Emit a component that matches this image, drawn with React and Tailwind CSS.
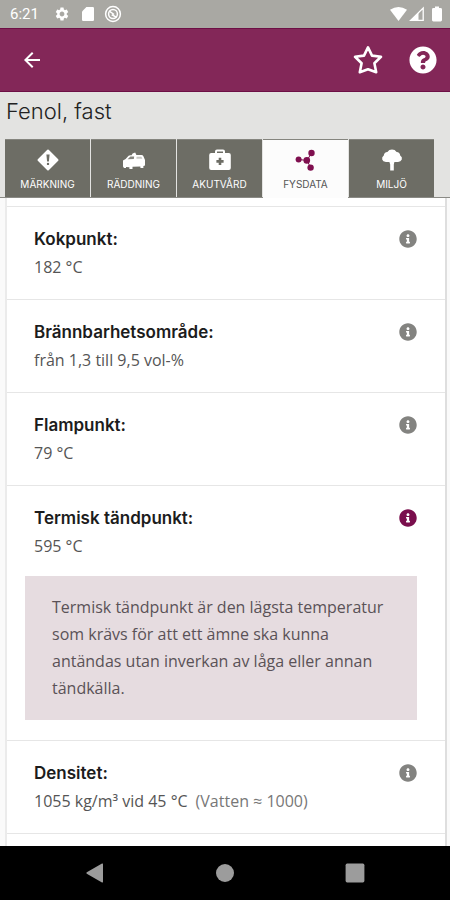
import { useState } from 'react';
import { FaInfoCircle, FaQuestionCircle } from 'react-icons/fa';
import { MdArrowBack, MdSettings } from 'react-icons/md';

const StarIcon = () => (
    <svg className="w-8 h-8" viewBox="0 0 32 32" fill="none" stroke="currentColor" strokeWidth="2.6" strokeLinejoin="round">
        <path d="M16 3.4 L20 11.6 L29 12.8 L22.4 19.2 L24.2 28.2 L16 25.2 L7.8 28.2 L9.6 19.2 L3 12.8 L12 11.6 Z" />
    </svg>
);

const WarningIcon = () => (
    <svg className="w-6 h-6" viewBox="0 0 24 24">
        <rect x="4.3" y="4.3" width="15.4" height="15.4" rx="1" transform="rotate(45 12 12)" fill="currentColor" />
        <path d="M10.4 6.5 h3.2 l-.7 7 h-1.8 Z" fill="#6d6d65" />
        <circle cx="12" cy="15.9" r="1.2" fill="#6d6d65" />
    </svg>
);

const RescueIcon = () => (
    <svg className="w-6 h-6" viewBox="0 0 24 24" fill="currentColor">
        <path d="M1 18.6 V12.4 L3.6 11 L6.6 7.8 Q7.2 7.2 8.2 7.2 H9.6 L10.6 5.4 L13.2 4.6 L14.4 7 H19.5 Q20.8 7 21.4 8.2 L23 12 V17.6 L21.4 18 V20 H18.4 V18.6 L10.5 18.8 V21 H7.4 V19.2 L4 19 V20 H2 Z" />
        <path d="M5.6 11.2 L8.4 8.6 H12.2 L11.8 11 Z" fill="#85857e" />
        <path d="M14.6 8.8 H19.4 L20.4 10.8 H14.4 Z" fill="#c8c8c4" />
    </svg>
);

const FirstAidIcon = () => (
    <svg className="w-6 h-6" viewBox="0 0 24 24">
        <path d="M8 5.5 V3.4 Q8 2.4 9 2.4 H15 Q16 2.4 16 3.4 V5.5" fill="none" stroke="currentColor" strokeWidth="2" />
        <rect x="1.2" y="5" width="21.6" height="17" rx="2" fill="currentColor" />
        <path d="M12 9.8 V17 M8.4 13.4 H15.6" stroke="#6d6d65" strokeWidth="2.6" />
    </svg>
);

const MoleculeIcon = () => (
    <svg className="w-6 h-6 text-[#7f0f4f]" viewBox="0 0 24 24" fill="currentColor">
        <path d="M4.5 11.5 L13 12.4 L17.5 5 M13 12.4 L16.6 19.6" fill="none" stroke="currentColor" strokeWidth="1" />
        <circle cx="4.6" cy="11.6" r="3" />
        <circle cx="12.8" cy="12.4" r="3.3" />
        <circle cx="17.5" cy="5" r="3.2" />
        <circle cx="16.6" cy="19.6" r="3.2" />
    </svg>
);

const TreeIcon = () => (
    <svg className="w-6 h-6" viewBox="0 0 24 24" fill="currentColor">
        <path d="M12 1.6 Q15 1.6 16.6 4 Q19.8 4.2 20.2 7.4 Q22.6 9 21.8 11.6 Q20.8 14 18 14 L14.4 14 L13.8 16.4 V22.6 H10.2 V16.4 L9.4 14 L6 14 Q2.8 13.8 2.2 11.4 Q1.6 8.8 3.8 7.4 Q4.2 4.2 7.4 4 Q9 1.6 12 1.6 Z" />
    </svg>
);

const tabs = [
    { id: 'markning', label: 'MÄRKNING', icon: WarningIcon },
    { id: 'raddning', label: 'RÄDDNING', icon: RescueIcon },
    { id: 'akutvard', label: 'AKUTVÅRD', icon: FirstAidIcon },
    { id: 'fysdata', label: 'FYSDATA', icon: MoleculeIcon },
    { id: 'miljo', label: 'MILJÖ', icon: TreeIcon },
];

const rows = [
    { label: 'Kokpunkt:', value: '182 °C' },
    { label: 'Brännbarhetsområde:', value: 'från 1,3 till 9,5 vol-%' },
    { label: 'Flampunkt:', value: '79 °C' },
    {
        label: 'Termisk tändpunkt:',
        value: '595 °C',
        info: 'Termisk tändpunkt är den lägsta temperatur som krävs för att ett ämne ska kunna antändas utan inverkan av låga eller annan tändkälla.',
    },
    { label: 'Densitet:', value: '1055 kg/m³ vid 45 °C', note: '(Vatten ≈ 1000)' },
];

const StatusBar = () => (
    <div className="flex h-7 shrink-0 items-center justify-between bg-[#a9a8a3] pl-[10px] pr-2 text-white">
        <div className="flex items-center">
            <span className="w-11 font-['Roboto',sans-serif] text-[15px]">6:21</span>
            <MdSettings className="h-4 w-4" />
            <svg className="ml-3 h-4 w-3" viewBox="0 0 12 16" fill="currentColor">
                <path d="M4.4 1 H10.8 Q12 1 12 2.2 V13.8 Q12 15 10.8 15 H1.2 Q0 15 0 13.8 V5.4 Z" />
            </svg>
            <svg className="ml-[10px] h-[18px] w-[18px]" viewBox="0 0 18 18" fill="none" stroke="currentColor">
                <circle cx="9" cy="9" r="7.4" strokeWidth="1.5" />
                <circle cx="9" cy="9" r="4.4" strokeWidth="1.5" />
                <path d="M5.6 6.4 L9.4 9 L8.4 10 L12.6 12.4" strokeWidth="1.5" />
            </svg>
        </div>
        <div className="flex items-center">
            <svg className="h-4 w-[17px]" viewBox="0 0 17 16" fill="currentColor">
                <path d="M0 3.8 Q8.5 -2 17 3.8 L8.5 15 Z" />
            </svg>
            <svg className="ml-[2px] h-4 w-[15px]" viewBox="0 0 15 16">
                <path d="M1.6 14.4 L14.2 2 V14.4 Z" fill="none" stroke="currentColor" strokeWidth="1.3" />
                <path d="M1 15 L9.5 6.6 V15 Z" fill="currentColor" />
            </svg>
            <svg className="ml-2 h-4 w-[10px]" viewBox="0 0 10 16" fill="currentColor">
                <path d="M3 0.6 H7 V2 H8.6 Q10 2 10 3.4 V14 Q10 15.4 8.6 15.4 H1.4 Q0 15.4 0 14 V3.4 Q0 2 1.4 2 H3 Z" />
            </svg>
        </div>
    </div>
);

const PropertyRow = ({ row, open, onToggle }) => (
    <section className={`border-t border-[#e6e6e6] pl-[27px] pr-7 pt-[18px] ${open ? 'pb-5' : 'pb-[18px]'}`}>
        <div className="flex items-center justify-between">
            <h2 className="font-['Inter',sans-serif] text-[17px] leading-7 font-semibold text-[#1c1c1c]">{row.label}</h2>
            <button type="button" aria-label={`Information om ${row.label}`} aria-expanded={open} onClick={onToggle}>
                <FaInfoCircle className={`h-[18px] w-[18px] ${open ? 'text-[#7a0e4d]' : 'text-[#838380]'}`} />
            </button>
        </div>
        <p className="text-base leading-7 text-[#555]">
            {row.value}
            {row.note && <span className="ml-2 text-[#777]">{row.note}</span>}
        </p>
        {open && row.info && (
            <p className="mt-4 -ml-[9px] bg-[#e6dce0] px-[27px] py-[18px] text-base leading-[27px] text-[#5a5257]">
                {row.info}
            </p>
        )}
    </section>
);

const App = () => {
    const [activeTab, setActiveTab] = useState('fysdata');
    const [openRow, setOpenRow] = useState('Termisk tändpunkt:');

    return (
        <div className="flex h-screen flex-col overflow-hidden bg-[#fafafa] font-['Open_Sans',sans-serif]">
            <StatusBar />

            {/* App bar */}
            <header className="flex h-16 shrink-0 items-center justify-between border-y border-[#6d0f45] bg-[#832758] pl-5 pr-[13px] text-white">
                <button type="button" aria-label="Tillbaka">
                    <MdArrowBack className="h-6 w-6" />
                </button>
                <div className="flex items-center gap-[25px]">
                    <button type="button" aria-label="Favorit">
                        <StarIcon />
                    </button>
                    <button type="button" aria-label="Hjälp">
                        <FaQuestionCircle className="h-7 w-7" />
                    </button>
                </div>
            </header>

            {/* Substance name and tabs */}
            <div className="shrink-0 border-b border-[#8a8a85] bg-[#e3e3e1]">
                <h1 className="px-[6px] pt-[3px] pb-3 font-['Inter',sans-serif] text-[22px] leading-8 font-light text-[#222]">Fenol, fast</h1>
                <nav className="flex gap-px pl-[5px] pr-4">
                    {tabs.map((tab) => {
                        const Icon = tab.icon;
                        const active = tab.id === activeTab;
                        return (
                            <button
                                key={tab.id}
                                type="button"
                                onClick={() => setActiveTab(tab.id)}
                                className={`flex flex-1 flex-col items-center gap-1 border-t border-[#85857e] pt-2 ${active ? '-mb-px h-[59px] bg-[#fcfcfc] text-[#555]' : 'h-[58px] bg-[#6d6d65] text-white'}`}
                            >
                                <Icon />
                                <span className="font-['Inter',sans-serif] text-[10px] leading-4">{tab.label}</span>
                            </button>
                        );
                    })}
                </nav>
            </div>

            {/* Physical data */}
            <main className="min-h-0 flex-1 overflow-hidden pl-[5px] pr-[3px]">
                <div className="min-h-full border-l-2 border-r-2 border-l-[#ebebeb] border-r-[#dedede] bg-white pt-2">
                    {rows.map((row) => (
                        <PropertyRow
                            key={row.label}
                            row={row}
                            open={openRow === row.label}
                            onToggle={() => setOpenRow(openRow === row.label ? null : row.label)}
                        />
                    ))}
                    <div className="border-t border-[#e6e6e6]" />
                </div>
            </main>

            {/* System navigation */}
            <footer className="flex h-[54px] shrink-0 items-center justify-center gap-[110px] bg-black text-[#9c9c9c]">
                <button type="button" aria-label="Bakåt">
                    <svg className="h-5 w-5" viewBox="0 0 20 20" fill="currentColor">
                        <path d="M18 1.2 V18.8 Q18 20 17 19.4 L1.8 10.8 Q0.8 10 1.8 9.2 L17 0.6 Q18 0 18 1.2 Z" />
                    </svg>
                </button>
                <button type="button" aria-label="Hem">
                    <svg className="h-5 w-5" viewBox="0 0 20 20" fill="currentColor">
                        <circle cx="10" cy="10" r="9" />
                    </svg>
                </button>
                <button type="button" aria-label="Översikt">
                    <svg className="h-5 w-5" viewBox="0 0 20 20" fill="currentColor">
                        <rect x="0.6" y="0.6" width="18.8" height="18.8" rx="1.6" />
                    </svg>
                </button>
            </footer>
        </div>
    );
};

export default App;
